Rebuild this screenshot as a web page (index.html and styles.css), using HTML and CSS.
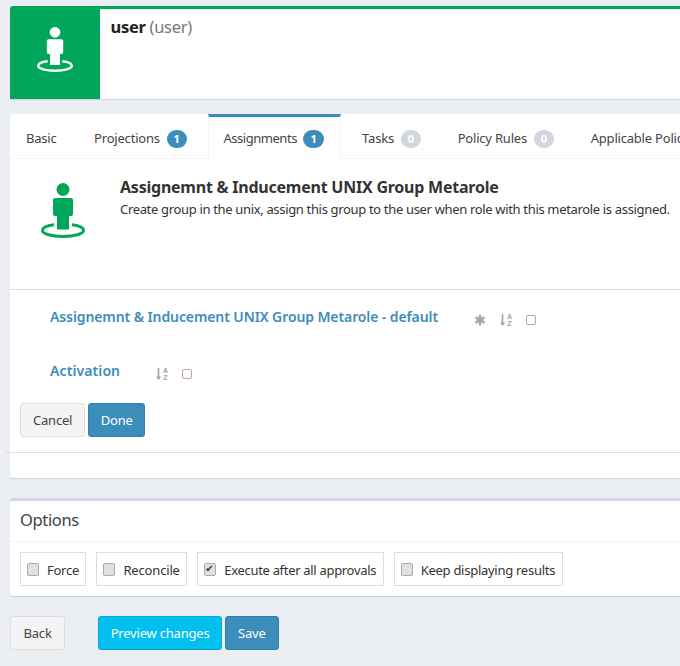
FILE: index.html
```html
<!DOCTYPE html>
<html lang="en">
<head>
<meta charset="utf-8">
<title>user (user)</title>
<link rel="stylesheet" href="styles.css">
</head>
<body>
<svg class="defs" width="0" height="0" aria-hidden="true">
  <symbol id="person" viewBox="0 0 44 55">
    <circle cx="22" cy="6.5" r="6.5"/>
    <path d="M14 15h16a2 2 0 0 1 2 2v14a2 2 0 0 1-2 2h-2v13.500h-12v-13.500h-2a2 2 0 0 1-2-2v-14a2 2 0 0 1 2-2z"/>
    <path class="ring" d="M13 41.800C6 42.600 1.500 44.800 1.500 47.500c0 3.300 9.200 6 20.500 6s20.500-2.700 20.500-6c0-2.700-4.500-4.900-11.500-5.700"/>
  </symbol>
  <symbol id="star" viewBox="0 0 12 12">
    <path class="star" d="M6 .8v10.400M1.500 3.400l9 5.200M10.500 3.400l-9 5.200"/>
  </symbol>
</svg>
<main class="page">
  <header class="head">
    <div class="head-icon"><svg class="head-person"><use href="#person"/></svg></div>
    <div class="head-name"><strong>user</strong> <span class="muted">(user)</span></div>
  </header>

  <section class="tabs-panel">
    <ul class="tabs">
      <li class="tab">Basic</li>
      <li class="tab">Projections <span class="badge blue">1</span></li>
      <li class="tab active"><span class="tab-label">Assignments</span> <span class="badge blue">1</span></li>
      <li class="tab">Tasks <span class="badge grey">0</span></li>
      <li class="tab">Policy Rules <span class="badge grey">0</span></li>
      <li class="tab">Applicable Policies <span class="badge grey">0</span></li>
    </ul>
    <div class="summary">
      <svg class="big-person"><use href="#person"/></svg>
      <div class="summary-text">
        <h2 class="title">Assignemnt &amp; Inducement UNIX Group Metarole</h2>
        <p class="desc">Create group in the unix, assign this group to the user when role with this metarole is assigned.</p>
      </div>
    </div>
    <div class="rule"></div>
    <div class="prop first">
      <a class="prop-name">Assignemnt &amp; Inducement UNIX Group Metarole - default</a>
      <svg class="ic star-ic"><use href="#star"/></svg>
      <svg class="ic sort-ic" viewBox="0 0 12 12"><path d="M1.700 0h1.600v8.500h1.700l-2.500 3.500-2.500-3.500h1.700z"/><text x="9.500" y="5" class="az">A</text><text x="9.500" y="12" class="az">Z</text></svg>
      <span class="sq"></span>
    </div>
    <div class="prop second">
      <a class="prop-name">Activation</a>
      <svg class="ic sort-ic" viewBox="0 0 12 12"><path d="M1.700 0h1.600v8.500h1.700l-2.500 3.500-2.500-3.500h1.700z"/><text x="9.500" y="5" class="az">A</text><text x="9.500" y="12" class="az">Z</text></svg>
      <span class="sq"></span>
    </div>
    <div class="actions">
      <button class="btn plain">Cancel</button>
      <button class="btn primary done">Done</button>
    </div>
    <div class="rule wide"></div>
  </section>

  <section class="options">
    <h3 class="options-title">Options</h3>
    <div class="options-body">
      <label class="opt"><input type="checkbox"><span>Force</span></label>
      <label class="opt opt-reconcile"><input type="checkbox"><span>Reconcile</span></label>
      <label class="opt opt-execute"><input type="checkbox" checked><span>Execute after all approvals</span></label>
      <label class="opt"><input type="checkbox"><span>Keep displaying results</span></label>
    </div>
  </section>

  <div class="footer">
    <button class="btn plain back">Back</button>
    <button class="btn info">Preview changes</button>
    <button class="btn primary">Save</button>
  </div>
</main>
</body>
</html>
```
FILE: styles.css
```css
html, body { margin: 0; padding: 0; overflow: hidden; height: 666px; }
body {
  background: #ebeef3;
  font-family: "Noto Sans", sans-serif;
  font-size: 13px;
  letter-spacing: -0.2px;
  color: #333;
}
.defs { position: absolute; }
.page { width: 900px; padding: 6px 0 0 10px; }

.head {
  display: flex;
  height: 90px;
  background: #fff;
  border-top: 3px solid #00a65a;
  border-radius: 3px 0 0 0;
  box-shadow: 0 1px 1px rgba(0,0,0,.12);
}
.head-icon {
  width: 90px;
  background: #00a65a;
  display: flex;
  justify-content: center;
  align-items: flex-start;
  padding-top: 18px;
  box-sizing: border-box;
}
.head-person { width: 36px; height: 45px; fill: #fff; color: #fff; }
.ring { fill: none; stroke: currentColor; stroke-width: 3; }
.head-name { padding: 6px 0 0 10.500px; font-size: 16.500px; line-height: 24px; letter-spacing: -0.3px; }
.head-name strong { color: #222; }
.muted { color: #777; }

.tabs-panel {
  margin-top: 15px;
  background: #fff;
  height: 364px;
  border-radius: 3px;
  box-shadow: 0 1px 1px rgba(0,0,0,.12);
}
.tabs {
  display: flex;
  margin: 0;
  padding: 0;
  list-style: none;
  height: 44px;
  border-bottom: 1px solid #f4f4f4;
  white-space: nowrap;
}
.tab {
  padding: 3px 16px 0;
  margin-right: 5px;
  line-height: 42px;
  color: #444;
}
.tab:first-child { margin-right: 5.500px; }
.tab.active {
  height: 42px;
  background: #fff;
  padding: 0 16px 0 15px;
  border-top: 3px solid #3c8dbc;
  border-left: 1px solid #f4f4f4;
  border-right: 1px solid #f4f4f4;
}
.tab-label { letter-spacing: -0.47px; }
.badge {
  display: inline-block;
  min-width: 20px;
  box-sizing: border-box;
  height: 18px;
  margin-left: 3.500px;
  border-radius: 10px;
  color: #fff;
  font-size: 11px;
  font-weight: 700;
  line-height: 18px;
  text-align: center;
}
.active .badge { min-width: 21px; margin-left: 3px; }
.blue { background: #3c8dbc; }
.grey { background: #d2d6de; }

.summary { display: flex; height: 130px; }
.big-person { width: 44px; height: 55px; margin: 24px 0 0 31px; fill: #00a65a; color: #00a65a; flex: none; }
.summary-text { margin: 17px 0 0 35px; }
.title { margin: 0; font-size: 16px; line-height: 22px; font-weight: 700; color: #333; letter-spacing: -0.23px; }
.desc { margin: 1px 0 0; line-height: 20px; letter-spacing: -0.335px; }

.rule { height: 1px; background: #ddd; }
.rule.wide { margin-left: -5px; margin-top: 15px; }

.prop { display: flex; align-items: center; padding-left: 40px; height: 22px; }
.prop.first { margin-top: 16px; }
.prop.second { margin-top: 32px; }
.prop-name { color: #3c8dbc; font-size: 14px; font-weight: 600; line-height: 22px; letter-spacing: -0.1px; }
.prop.second .prop-name { letter-spacing: 0.1px; }
.ic { width: 12px; height: 12px; fill: #9aa3b5; margin-top: 6px; flex: none; }
.star-ic { margin-left: 36px; }
.prop.second .sort-ic { margin-left: 36px; }
.prop.first .sort-ic { margin-left: 14px; }
.sq {
  box-sizing: border-box;
  width: 10px;
  height: 10px;
  margin: 6px 0 0 14px;
  border: 1px solid #b8a0b4;
  border-radius: 2px;
}
.star { stroke: #9aa3b5; stroke-width: 2.400; fill: none; }
.az { font: 700 7px "Liberation Sans", sans-serif; text-anchor: middle; letter-spacing: 0; }

.actions { display: flex; gap: 3px; margin: 21px 0 0 10px; }
.btn {
  height: 34px;
  padding: 0 12px;
  font: inherit;
  letter-spacing: inherit;
  border: 1px solid transparent;
  border-radius: 3px;
  white-space: nowrap;
}
.plain { background: #f4f4f4; border-color: #ddd; color: #444; }
.primary { background: #3c8dbc; border-color: #367fa9; color: #fff; }
.info { background: #00c0ef; border-color: #00acd6; color: #fff; padding: 0 11.500px; }
.done { padding: 0 11.500px; }

.options {
  margin-top: 20px;
  height: 95px;
  background: #fff;
  border-top: 3px solid #d2d6de;
  border-radius: 3px;
  box-shadow: 0 1px 1px rgba(0,0,0,.12);
}
.options-title {
  margin: 0;
  padding-left: 10px;
  height: 40px;
  font-size: 16.500px;
  font-weight: 400;
  line-height: 38px;
  letter-spacing: -0.35px;
  color: #444;
  border-bottom: 1px solid #f4f4f4;
}
.options-body { display: flex; gap: 10px; padding: 10px 0 0 10px; }
.opt {
  display: flex;
  align-items: center;
  height: 32px;
  padding: 0 6.500px 0 6px;
  border: 1px solid #ddd;
  letter-spacing: -0.27px;
}
.opt-reconcile { letter-spacing: -0.17px; }
.opt-execute { letter-spacing: -0.31px; }
.opt span { padding-top: 1px; }
.opt input {
  appearance: none;
  position: relative;
  box-sizing: border-box;
  width: 12px;
  height: 13px;
  margin: 0 8px 0 0;
  background: #e0e0e0;
  border: 1px solid #aaa;
  border-radius: 2px;
}
.opt input:checked::before {
  content: "✔";
  position: absolute;
  left: 0;
  top: -2px;
  font: 10px/13px "DejaVu Sans", sans-serif;
  color: #333;
}

.footer { display: flex; margin-top: 20px; }
.back { margin-right: 33px; padding: 0 12.500px; }
.info { margin-right: 3px; }
```
